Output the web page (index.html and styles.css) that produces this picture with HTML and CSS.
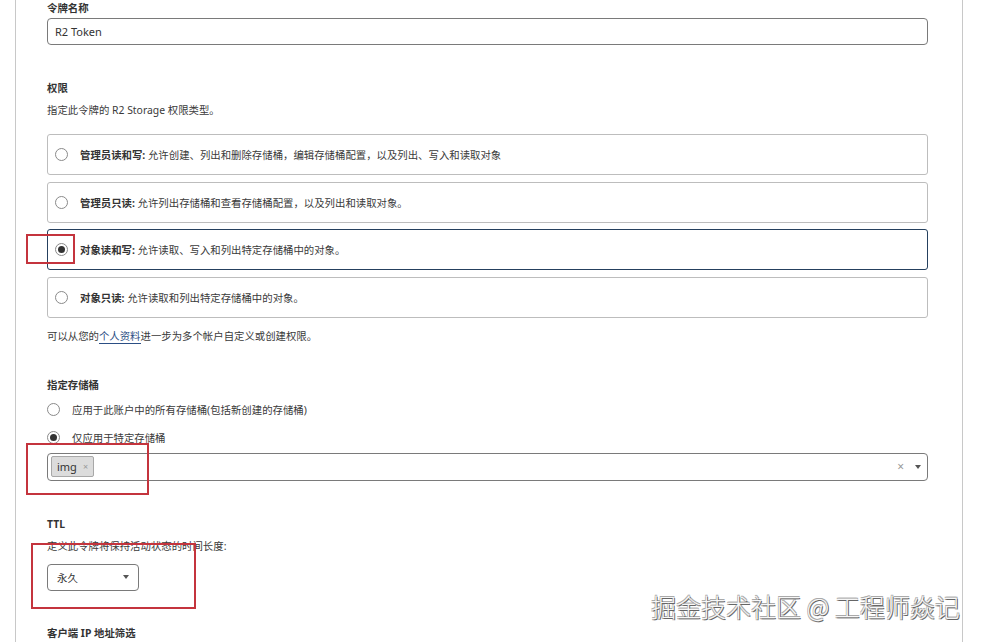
FILE: index.html
```html
<!DOCTYPE html>
<html lang="zh-CN">
<head>
<meta charset="utf-8">
<title>R2 Token</title>
<link rel="stylesheet" href="styles.css">
</head>
<body>
<div class="page">
  <div class="rail"></div>
  <main class="main">
    <div class="field">
      <div class="label">令牌名称</div>
      <div class="input">R2 Token</div>
    </div>

    <section class="section perm">
      <div class="label">权限</div>
      <div class="desc">指定此令牌的 R2 Storage 权限类型。</div>
      <div class="options">
        <div class="option"><span class="radio"></span><span class="otext"><b>管理员读和写:</b> 允许创建、列出和删除存储桶，编辑存储桶配置，以及列出、写入和读取对象</span></div>
        <div class="option"><span class="radio"></span><span class="otext"><b>管理员只读:</b> 允许列出存储桶和查看存储桶配置，以及列出和读取对象。</span></div>
        <div class="option selected"><span class="radio checked"></span><span class="otext"><b>对象读和写:</b> 允许读取、写入和列出特定存储桶中的对象。</span></div>
        <div class="option"><span class="radio"></span><span class="otext"><b>对象只读:</b> 允许读取和列出特定存储桶中的对象。</span></div>
      </div>
      <div class="note">可以从您的<a class="link">个人资料</a>进一步为多个帐户自定义或创建权限。</div>
    </section>

    <section class="section buckets">
      <div class="label">指定存储桶</div>
      <div class="radio-row first"><span class="radio"></span><span>应用于此账户中的所有存储桶(包括新创建的存储桶)</span></div>
      <div class="radio-row"><span class="radio checked"></span><span>仅应用于特定存储桶</span></div>
      <div class="multiselect">
        <span class="tag">img <span class="tag-x">×</span></span>
        <span class="ms-controls"><span class="clear">×</span><span class="caret"></span></span>
      </div>
    </section>

    <section class="section ttl">
      <div class="label">TTL</div>
      <div class="desc">定义此令牌将保持活动状态的时间长度:</div>
      <div class="select"><span>永久</span><span class="caret"></span></div>
    </section>

    <section class="section ip">
      <div class="label">客户端 IP 地址筛选</div>
    </section>
  </main>
  <div class="annot a1"></div>
  <div class="annot a2"></div>
  <div class="annot a3"></div>
  <div class="watermark">掘金技术社区 @ 工程师焱记</div>
</div>
</body>
</html>
```
FILE: styles.css
```css
* { box-sizing: border-box; }
html, body { margin: 0; padding: 0; background: #fff; }
body {
  font-family: "Noto Sans", "Noto Sans CJK SC", sans-serif;
  font-size: 10.4px;
  color: #3a3a3a;
  overflow: hidden;
}
.page {
  position: relative;
  display: flex;
  height: 642px;
}
.rail {
  width: 16px;
  border-right: 1px solid #c8c8c8;
  flex: none;
}
.main {
  width: 947px;
  flex: none;
  border-right: 1px solid #c8c8c8;
  padding: 0 34px 0 31px;
}
.label {
  font-weight: bold;
  line-height: 16px;
  color: #333;
}
.desc, .note { line-height: 16px; }
.input {
  margin-top: 2px;
  height: 27px;
  border: 1px solid #7a7a7a;
  border-radius: 4px;
  padding: 0 7px;
  display: flex;
  align-items: center;
  font-size: 11px;
  color: #333;
}
.perm { margin-top: 35px; }
.perm .desc { margin-top: 6px; }
.options {
  margin-top: 16px;
  display: flex;
  flex-direction: column;
  gap: 6.5px;
}
.option {
  height: 41px;
  border: 1px solid #bdbdbd;
  border-radius: 3px;
  display: flex;
  align-items: center;
  padding-left: 7px;
}
.option.selected { border-color: #25405e; }
.option .radio { margin-right: 12px; }
.otext b { font-weight: bold; color: #333; }
.radio {
  width: 13px;
  height: 13px;
  border: 1px solid #8a8a8a;
  border-radius: 50%;
  background: #fff;
  flex: none;
  display: inline-flex;
  align-items: center;
  justify-content: center;
}
.radio.checked::after {
  content: "";
  width: 7px;
  height: 7px;
  border-radius: 50%;
  background: #333;
}
.note { margin-top: 10px; }
.link {
  color: #2b4e84;
  text-decoration: none;
  border-bottom: 1px solid #2b4e84;
}
.buckets { margin-top: 33px; }
.radio-row {
  display: flex;
  align-items: center;
  height: 20px;
  margin-top: 8px;
}
.radio-row.first { margin-top: 7px; }
.radio-row .radio { margin-right: 12px; }
.multiselect {
  margin-top: 5px;
  height: 28px;
  border: 1px solid #7a7a7a;
  border-radius: 4px;
  display: flex;
  align-items: center;
  justify-content: space-between;
  padding: 0 6px 0 3px;
}
.tag {
  height: 21px;
  background: #dcdcdc;
  border: 1px solid #a8a8a8;
  border-radius: 2px;
  display: inline-flex;
  align-items: center;
  padding: 0 5px 0 5px;
  font-size: 11px;
  color: #333;
  gap: 6px;
}
.tag-x { color: #999; font-size: 9px; }
.ms-controls { display: flex; align-items: center; gap: 11px; }
.clear { color: #999; font-size: 12px; }
.caret {
  width: 0;
  height: 0;
  border-left: 3.5px solid transparent;
  border-right: 3.5px solid transparent;
  border-top: 4px solid #555;
}
.ttl { margin-top: 35px; }
.ttl .desc { margin-top: 6px; }
.select {
  margin-top: 10px;
  width: 92px;
  height: 27px;
  border: 1px solid #7a7a7a;
  border-radius: 4px;
  display: flex;
  align-items: center;
  justify-content: space-between;
  padding: 0 9px 0 9px;
  color: #333;
}
.ip { margin-top: 34px; }
.annot {
  position: absolute;
  border: 2px solid #c4343d;
}
.a1 { left: 26px; top: 234px; width: 49px; height: 30px; }
.a2 { left: 26px; top: 443px; width: 123px; height: 52px; }
.a3 { left: 31px; top: 543px; width: 165px; height: 66px; }
.watermark {
  position: absolute;
  left: 651px;
  top: 590px;
  font-family: "Noto Sans CJK SC", sans-serif;
  font-weight: 300;
  font-size: 25px;
  line-height: 32px;
  color: #f7f7f7;
  white-space: nowrap;
  text-shadow: 1px 1px 0 #666, -0.6px -0.6px 0 #aaa, 0.6px -0.6px 0 #aaa, -0.6px 0.6px 0 #aaa;
}
```
